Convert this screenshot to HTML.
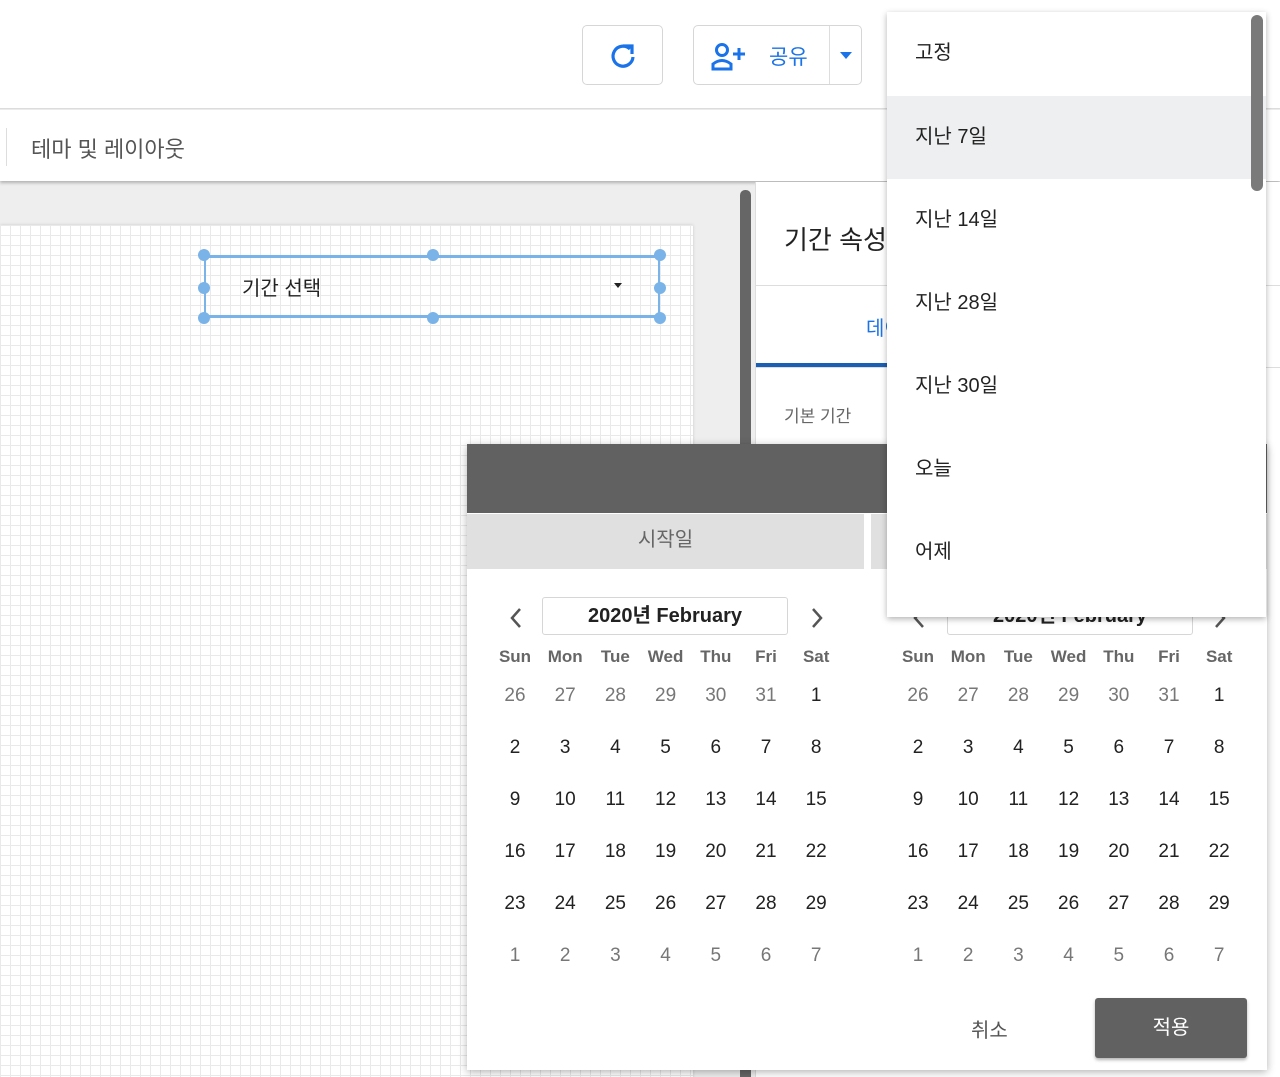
<!DOCTYPE html>
<html><head><meta charset="utf-8"><style>
*{box-sizing:border-box;margin:0;padding:0}
html,body{width:1280px;height:1077px;overflow:hidden}
body{position:relative;background:#eeeeee;font-family:"Liberation Sans","Noto Sans CJK KR",sans-serif;color:#222}
.abs{position:absolute}
.top{left:0;top:0;width:1280px;height:109px;background:#fff;border-bottom:1px solid #ddd}
.bar2{left:0;top:110px;width:1280px;height:71px;background:#fff;box-shadow:0 2px 3px rgba(0,0,0,.25)}
.btn{background:#fff;border:1px solid #d6d6d6;border-radius:5px}
.grid{left:0;top:225px;width:693px;height:860px;background-color:#fff;
background-image:linear-gradient(#e9e9e9 1px,transparent 1px),linear-gradient(90deg,#e9e9e9 1px,transparent 1px);background-size:10px 10px;box-shadow:0 0 3px rgba(0,0,0,.15)}
.dlg{left:467px;top:444px;width:800px;height:626px;background:#fff;box-shadow:0 2px 8px rgba(0,0,0,.3)}
.cal span{position:absolute;width:40px;text-align:center;font-size:19px;color:#222}
.hd{font-size:17px!important;font-weight:bold;color:#666!important}
.menu{left:887px;top:12px;width:379px;height:605px;background:#fff;box-shadow:0 2px 6px rgba(0,0,0,.3)}
.mi{position:absolute;left:0;width:379px;height:83px;line-height:83px;padding-left:28px;font-size:20px;color:#222}
</style></head><body>
<div class="abs top"></div>
<div class="abs btn" style="left:582px;top:25px;width:81px;height:60px">
<svg class="abs" style="left:25px;top:14px" width="30" height="32" viewBox="0 0 30 32"><path d="M22 9 A10 10 0 1 0 25 17" fill="none" stroke="#1a73e8" stroke-width="3.2"/><path d="M15 6 L24 6 L24 14" fill="none" stroke="#1a73e8" stroke-width="3.2"/></svg></div>
<div class="abs btn" style="left:693px;top:25px;width:169px;height:60px">
<svg class="abs" style="left:17px;top:16px" width="40" height="30" viewBox="0 0 40 30"><circle cx="11" cy="8" r="5.5" fill="none" stroke="#1a73e8" stroke-width="3"/><path d="M2 27 V22 Q11 15 20 22 V27 Z" fill="none" stroke="#1a73e8" stroke-width="3"/><path d="M28 6 V18 M22 12 H34" stroke="#1a73e8" stroke-width="3"/></svg>
<div class="abs" style="left:75px;top:15px;font-size:21px;color:#1a73e8">공유</div>
<div class="abs" style="left:135px;top:0;width:1px;height:58px;background:#ddd"></div>
<div class="abs" style="left:146px;top:26px;border-left:6px solid transparent;border-right:6px solid transparent;border-top:7px solid #1a73e8"></div></div>
<div class="abs bar2"><div class="abs" style="left:6px;top:18px;width:1px;height:38px;background:#ddd"></div>
<div class="abs" style="left:31px;top:22px;font-size:22px;color:#555">테마 및 레이아웃</div></div>
<div class="abs grid"></div>
<div class="abs" style="left:740px;top:190px;width:11px;height:900px;background:#666;border-radius:5px"></div>
<div class="abs" style="left:755px;top:182px;width:525px;height:900px;background:#fff;border-left:1px solid #ddd">
<div class="abs" style="left:28px;top:38px;font-size:26px;color:#222">기간 속성</div>
<div class="abs" style="left:0;top:103px;width:525px;height:1px;background:#ddd"></div>
<div class="abs" style="left:110px;top:130px;font-size:20px;color:#1a73e8">데이터</div>
<div class="abs" style="left:0;top:181px;width:140px;height:4px;background:#1a5fb4"></div>
<div class="abs" style="left:0;top:185px;width:525px;height:1px;background:#ddd"></div>
<div class="abs" style="left:28px;top:220px;font-size:17px;color:#666">기본 기간</div></div>
<div class="abs" style="left:204px;top:255px;width:456px;height:63px;border:3px solid #7ab3e8;border-left-width:2px;border-right-width:2px"></div>
<div class="abs" style="left:242px;top:272px;font-size:20px">기간 선택</div>
<div class="abs" style="left:614px;top:283px;border-left:4px solid transparent;border-right:4px solid transparent;border-top:5px solid #222"></div>
<div id="h"></div>
<div class="abs dlg">
<div class="abs" style="left:0;top:0;width:800px;height:69px;background:#616161"></div>
<div class="abs" style="left:0;top:70px;width:397px;height:55px;background:#e0e0e0;text-align:center;line-height:52px;font-size:20px;color:#666">시작일</div>
<div class="abs" style="left:404px;top:70px;width:396px;height:55px;background:#e0e0e0"></div>
<div class="abs btn" style="left:75px;top:153px;width:246px;height:38px;border-radius:3px;text-align:center;line-height:36px;font-size:20px;font-weight:bold">2020년 February</div>
<div class="abs btn" style="left:480px;top:153px;width:246px;height:38px;border-radius:3px;text-align:center;line-height:36px;font-size:20px;font-weight:bold">2020년 February</div>
<svg class="abs" style="left:42px;top:163px" width="14" height="22"><path d="M11 2 L3 11 L11 20" fill="none" stroke="#555" stroke-width="2.5"/></svg>
<svg class="abs" style="left:343px;top:163px" width="14" height="22"><path d="M3 2 L11 11 L3 20" fill="none" stroke="#555" stroke-width="2.5"/></svg>
<svg class="abs" style="left:445px;top:163px" width="14" height="22"><path d="M11 2 L3 11 L11 20" fill="none" stroke="#555" stroke-width="2.5"/></svg>
<svg class="abs" style="left:746px;top:163px" width="14" height="22"><path d="M3 2 L11 11 L3 20" fill="none" stroke="#555" stroke-width="2.5"/></svg>
<div class="abs cal" id="c1" style="left:28px;top:0"></div>
<div class="abs cal" id="c2" style="left:431px;top:0"></div>
<div class="abs" style="left:504px;top:570px;font-size:20px;color:#555">취소</div>
<div class="abs" style="left:628px;top:554px;width:152px;height:60px;background:#616161;border-radius:3px;color:#fff;font-size:20px;text-align:center;line-height:60px;box-shadow:0 2px 3px rgba(0,0,0,.3)">적용</div>
</div>
<div class="abs menu">
<div class="mi" style="top:0">고정</div>
<div class="mi" style="top:84px;background:#eeeff0">지난 7일</div>
<div class="mi" style="top:167px">지난 14일</div>
<div class="mi" style="top:250px">지난 28일</div>
<div class="mi" style="top:333px">지난 30일</div>
<div class="mi" style="top:416px">오늘</div>
<div class="mi" style="top:499px">어제</div>
<div class="abs" style="left:364px;top:3px;width:12px;height:176px;background:#7a7a7a;border-radius:6px"></div>
</div>
<script>
var hs=[[204,255],[433,255],[660,255],[204,288],[660,288],[204,318],[433,318],[660,318]];
var h='';hs.forEach(function(p){h+='<div class="abs" style="left:'+(p[0]-6)+'px;top:'+(p[1]-6)+'px;width:12px;height:12px;border-radius:50%;background:#7ab3e8"></div>'});
document.getElementById('h').outerHTML=h;
var days=['Sun','Mon','Tue','Wed','Thu','Fri','Sat'];
var rows=[[26,27,28,29,30,31,1],[2,3,4,5,6,7,8],[9,10,11,12,13,14,15],[16,17,18,19,20,21,22],[23,24,25,26,27,28,29],[1,2,3,4,5,6,7]];
['c1','c2'].forEach(function(id){var s='';
days.forEach(function(d,i){s+='<span class="hd" style="left:'+(i*50.2)+'px;top:203px">'+d+'</span>'});
rows.forEach(function(r,j){r.forEach(function(n,i){var g=(j==0&&i<6)||j==5;s+='<span style="left:'+(i*50.2)+'px;top:'+(241+j*52)+'px;'+(g?'color:#777':'')+'">'+n+'</span>'})});
document.getElementById(id).innerHTML=s;});
</script>
</body></html>
